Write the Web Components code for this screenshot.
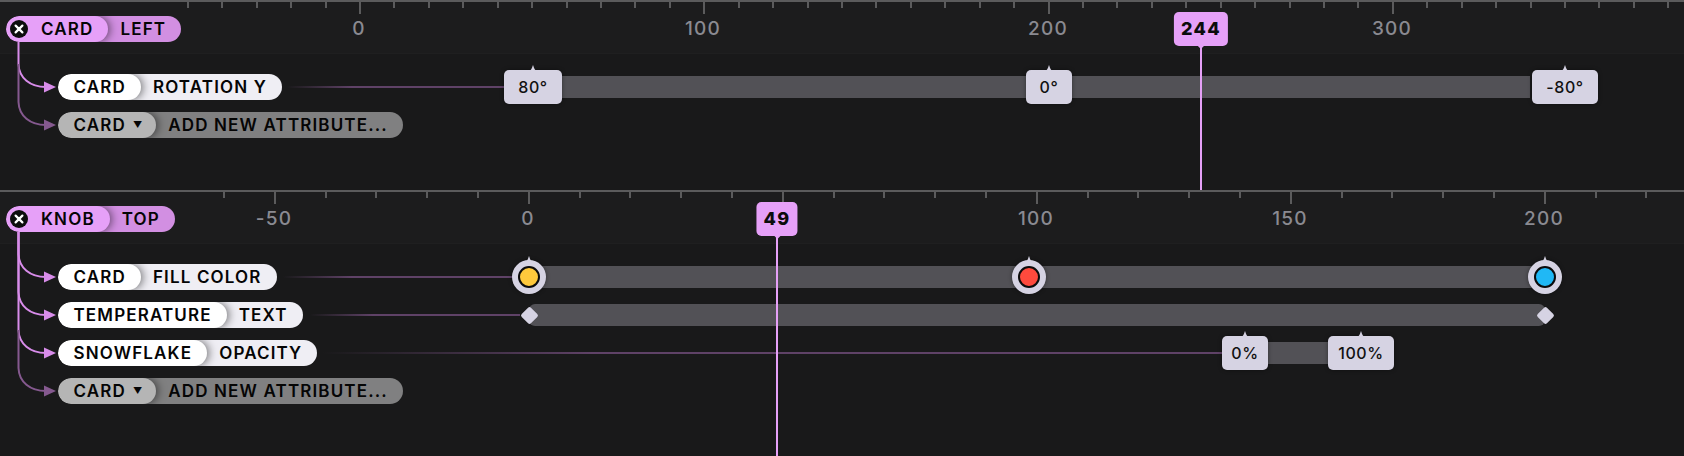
<!DOCTYPE html>
<html>
<head>
<meta charset="utf-8">
<style>
    html,body{margin:0;padding:0;background:#19191a;height:456px;overflow:hidden}
    body{font-family:Inter,"Liberation Sans",sans-serif}
    small{font-size:9px;vertical-align:1.5px;margin-left:7px;letter-spacing:0}
</style>
</head>
<body>

<tl-section height="190" branches="87,125" head-text="244" playhead="1201" origin="360" minor="34.43" every="10" step="100" first="0">
    <tl-pill slot="head" kind="head">CARD<span slot="attr">LEFT</span></tl-pill>
    <tl-row lead="287,504">
        <tl-pill slot="label">CARD<span slot="attr">ROTATION Y</span></tl-pill>
        <tl-bar from="524" to="1530"></tl-bar>
        <tl-tag at="533" w="58">80°</tl-tag>
        <tl-tag at="1049" w="46">0°</tl-tag>
        <tl-tag at="1565" w="66">-80°</tl-tag>
    </tl-row>
    <tl-row>
        <tl-pill slot="label" kind="add">CARD <small>▼</small><span slot="attr">ADD NEW ATTRIBUTE...</span></tl-pill>
    </tl-row>
</tl-section>

<tl-section height="266" branches="277,315,353,391" head-text="49" playhead="777" origin="528.7" minor="50.8" every="5" step="50" first="-50">
    <tl-pill slot="head" kind="head">KNOB<span slot="attr">TOP</span></tl-pill>
    <tl-row lead="283,512">
        <tl-pill slot="label">CARD<span slot="attr">FILL COLOR</span></tl-pill>
        <tl-bar from="529" to="1545"></tl-bar>
        <tl-swatch at="529" color="#ffc93c"></tl-swatch>
        <tl-swatch at="1029" color="#ff4a3d"></tl-swatch>
        <tl-swatch at="1545" color="#20b8f5"></tl-swatch>
    </tl-row>
    <tl-row lead="310,520">
        <tl-pill slot="label">TEMPERATURE<span slot="attr">TEXT</span></tl-pill>
        <tl-bar from="529" to="1545" round></tl-bar>
        <tl-diamond at="529"></tl-diamond>
        <tl-diamond at="1545"></tl-diamond>
    </tl-row>
    <tl-row lead="322,1222">
        <tl-pill slot="label">SNOWFLAKE<span slot="attr">OPACITY</span></tl-pill>
        <tl-bar from="1265" to="1330"></tl-bar>
        <tl-tag at="1245" w="46">0%</tl-tag>
        <tl-tag at="1361" w="66">100%</tl-tag>
    </tl-row>
    <tl-row>
        <tl-pill slot="label" kind="add">CARD <small>▼</small><span slot="attr">ADD NEW ATTRIBUTE...</span></tl-pill>
    </tl-row>
</tl-section>

<script>
class TlSection extends HTMLElement{
    constructor(){
        super()
        this.attachShadow({mode:'open'})
    }
    connectedCallback(){
        const height=this.getAttribute('height')
        const origin=parseFloat(this.getAttribute('origin'))
        const minor=parseFloat(this.getAttribute('minor'))
        const every=parseInt(this.getAttribute('every'))
        const step=parseInt(this.getAttribute('step'))
        const first=parseInt(this.getAttribute('first'))
        const playhead=parseInt(this.getAttribute('playhead'))
        const top=this.getBoundingClientRect().top

        // ruler ticks and numbers
        let ticks=''
        let labels=''
        for(let i=-30;i<60;i++){
            const x=Math.round(origin+i*minor)
            if(x<180||x>1684) continue
            const major=i%every===0
            ticks+=`<i class="${major?'major':''}" style="left:${x-1}px"></i>`
            const value=i/every*step
            // the playhead flag hides a number that falls under it
            if(major&&value>=first&&Math.abs(x-playhead)>45){
                labels+=`<b style="left:${x-1}px">${value}</b>`
            }
        }

        // elbows from the head pill down to each row
        const branches=this.getAttribute('branches').split(',').map(y=>parseInt(y)-top)
        let elbows=''
        branches.forEach((y,n)=>{
            const last=n===branches.length-1
            const color=last?'#85598f':'#d88cea'
            const from=last?branches[n-1]-23:42
            elbows+=`<path d="M18.5 ${from} V${y-23} C19 ${y-9} 30 ${y} 46 ${y}" stroke="${color}" fill="none" stroke-width="2"/>
            <path d="M44 ${y-5.5} L56 ${y} L44 ${y+5.5} Z" fill="${color}"/>`
        })

        this.shadowRoot.innerHTML=`
            <style>
                :host{display:block;position:relative;height:${height}px;overflow:hidden}
                .ruler{position:relative;height:53px;background:#1c1c1d;box-shadow:0 1px 0 #1f1f20;border-top:2px solid #5b5b5c;box-sizing:border-box}
                .ruler i{position:absolute;top:0;width:2px;height:6px;background:#5b5b5c}
                .ruler i.major{height:12px}
                .ruler b{position:absolute;top:17px;transform:translateX(-50%);font-size:19px;line-height:20px;font-weight:500;letter-spacing:1.2px;color:#8a8a91}
                .head{position:absolute;left:6px;top:16px;z-index:3}
                .rows{padding-top:15px}
                svg.elbows{position:absolute;left:0;top:0;z-index:1}
                .playhead{position:absolute;left:${playhead}px;top:12px;bottom:0;width:2px;margin-left:-1px;z-index:4;background:#e6a0f8}
                .playhead span{position:absolute;top:0;left:1px;transform:translateX(-50%);height:34px;padding:0 7px;border-radius:5px;background:#e6a0f8;color:#0c0c0c;font-size:18px;line-height:34px;font-weight:800;letter-spacing:1.4px;white-space:nowrap}
                .playhead span::after{content:"";position:absolute;left:50%;bottom:-3px;margin-left:-3px;border:3px solid transparent;border-bottom:0;border-top-color:#e6a0f8}
            </style>
            <div class="ruler">${ticks}${labels}</div>
            <div class="head"><slot name="head"></slot></div>
            <svg class="elbows" width="60" height="${height}">${elbows}</svg>
            <div class="rows"><slot></slot></div>
            <div class="playhead"><span>${this.getAttribute('head-text')}</span></div>
        `
    }
}
window.customElements.define('tl-section',TlSection)

class TlPill extends HTMLElement{
    constructor(){
        super()
        this.attachShadow({mode:'open'})
    }
    connectedCallback(){
        const kind=this.getAttribute('kind')||'row'
        const icon=kind==='head'?`<svg class="x" width="18" height="18" viewBox="0 0 18 18"><circle cx="9" cy="9" r="9" fill="#0d0d0d"/><path d="M5.6 5.6 L12.4 12.4 M12.4 5.6 L5.6 12.4" stroke="#fff" stroke-width="2.2" stroke-linecap="round"/></svg>`:''
        this.shadowRoot.innerHTML=`
            <style>
                :host{display:inline-flex;height:26px;border-radius:13px;overflow:hidden;color:#050505;font-size:17px;line-height:26px;font-weight:600;letter-spacing:1.15px;white-space:nowrap;vertical-align:top}
                .obj{display:flex;align-items:center;position:relative;z-index:1;border-radius:13px;padding:0 15px 0 15.5px;box-shadow:2px 0 9px rgba(0,0,0,.5)}
                .attr{display:flex;align-items:center;margin-left:-13px;padding:0 15px 0 25px}
                .x{margin-right:13px;margin-left:-11.5px}
                :host([kind=head]) .obj{background:#e6a0f8}
                :host([kind=head]) .attr{background:#d28fe2;padding:0 15px 0 25px}
                :host(:not([kind])) .obj{background:#fff}
                :host(:not([kind])) .attr{background:#efeef4}
                :host([kind=add]) .obj{background:#b5b5b5;padding-right:14px}
                :host([kind=add]) .attr{background:#808081;padding:0 15px 0 25px}
            </style>
            <div class="obj">${icon}<slot></slot></div>
            <div class="attr"><slot name="attr"></slot></div>
        `
    }
}
window.customElements.define('tl-pill',TlPill)

class TlRow extends HTMLElement{
    constructor(){
        super()
        this.attachShadow({mode:'open'})
    }
    connectedCallback(){
        const lead=this.getAttribute('lead')
        let line=''
        if(lead){
            const [a,b]=lead.split(',').map(Number)
            line=`<div class="lead" style="left:${a}px;width:${b-a}px"></div>`
        }
        this.shadowRoot.innerHTML=`
            <style>
                :host{display:flex;align-items:center;position:relative;height:38px;padding-left:58px}
                .lead{position:absolute;top:18px;height:2px;background:linear-gradient(90deg,rgba(96,66,104,0),#5f4267 30%)}
            </style>
            ${line}
            <slot name="label"></slot>
            <slot></slot>
        `
    }
}
window.customElements.define('tl-row',TlRow)

class TlBar extends HTMLElement{
    constructor(){
        super()
        this.attachShadow({mode:'open'})
    }
    connectedCallback(){
        const from=parseFloat(this.getAttribute('from'))
        const to=parseFloat(this.getAttribute('to'))
        this.shadowRoot.innerHTML=`
            <style>
                :host{position:absolute;left:${from}px;width:${to-from}px;top:8px;height:22px;background:#525156;border-radius:${this.hasAttribute('round')?'6px':'0'}}
            </style>
        `
    }
}
window.customElements.define('tl-bar',TlBar)

const tipSvg=(fill)=>`<svg class="tip" width="10" height="6" viewBox="0 0 10 6"><path d="M0 6 C3 6 4 3 5 0 C6 3 7 6 10 6 Z" fill="${fill}"/></svg>`

class TlTag extends HTMLElement{
    constructor(){
        super()
        this.attachShadow({mode:'open'})
    }
    connectedCallback(){
        this.shadowRoot.innerHTML=`
            <style>
                :host{position:absolute;left:${this.getAttribute('at')}px;top:2px;transform:translateX(-50%);width:${this.getAttribute('w')}px;text-align:center;height:34px;border-radius:5px;background:#d6d3e3;color:#111;font-size:16px;line-height:34px;font-weight:500;letter-spacing:.6px;white-space:nowrap;box-shadow:0 0 4px rgba(0,0,0,.4)}
                .tip{position:absolute;left:50%;top:-5px;margin-left:-5px}
            </style>
            ${tipSvg('#d6d3e3')}<slot></slot>
        `
    }
}
window.customElements.define('tl-tag',TlTag)

class TlSwatch extends HTMLElement{
    constructor(){
        super()
        this.attachShadow({mode:'open'})
    }
    connectedCallback(){
        this.shadowRoot.innerHTML=`
            <style>
                :host{position:absolute;left:${this.getAttribute('at')}px;top:2px;margin-left:-17px;width:34px;height:34px;border-radius:50%;background:#d6d3e3;display:flex;align-items:center;justify-content:center;box-shadow:0 0 4px rgba(0,0,0,.4)}
                .tip{position:absolute;left:12px;top:-4px}
                .dot{width:18px;height:18px;border-radius:50%;border:2px solid #0c0c0c;background:${this.getAttribute('color')}}
            </style>
            ${tipSvg('#d6d3e3')}<div class="dot"></div>
        `
    }
}
window.customElements.define('tl-swatch',TlSwatch)

class TlDiamond extends HTMLElement{
    constructor(){
        super()
        this.attachShadow({mode:'open'})
    }
    connectedCallback(){
        this.shadowRoot.innerHTML=`
            <style>
                :host{position:absolute;left:${this.getAttribute('at')}px;top:19px;margin:-6.5px 0 0 -6.5px;width:13px;height:13px;border-radius:2px;background:#d6d3e3;transform:rotate(45deg)}
            </style>
        `
    }
}
window.customElements.define('tl-diamond',TlDiamond)
</script>
</body>
</html>
